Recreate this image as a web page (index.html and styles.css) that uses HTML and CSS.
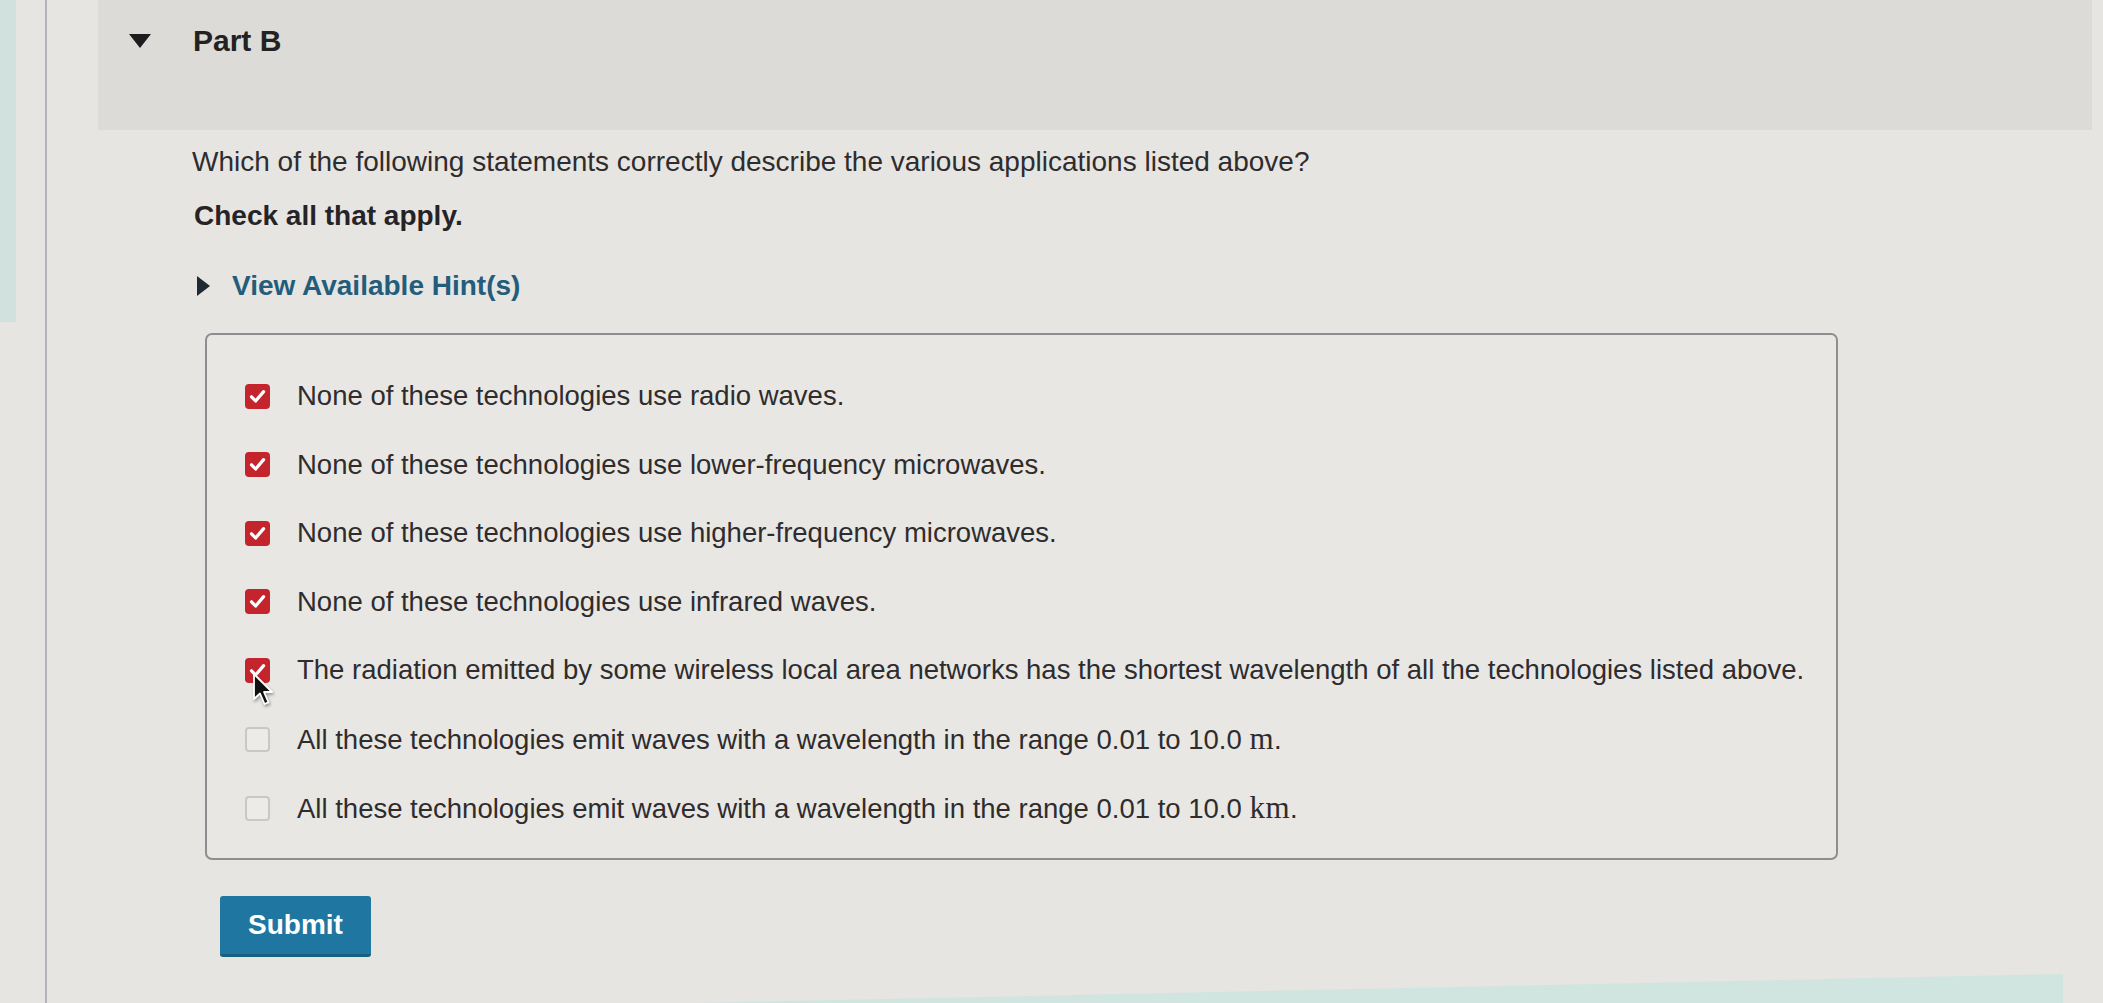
FILE: index.html
```html
<!DOCTYPE html>
<html lang="en">
<head>
<meta charset="utf-8">
<title>Part B</title>
<link rel="stylesheet" href="styles.css">
</head>
<body>
<div class="page">
  <aside class="rail"><div class="rail-teal"></div></aside>
  <main class="main">
    <header class="part-head">
      <span class="caret-down"></span>
      <h2 class="part-title">Part B</h2>
    </header>
    <section class="part-body">
      <p class="question">Which of the following statements correctly describe the various applications listed above?</p>
      <p class="instr">Check all that apply.</p>
      <div class="hint"><span class="caret-right"></span><span class="hint-link">View Available Hint(s)</span></div>
      <div class="options">
        <label class="opt"><span class="cb on"><svg viewBox="0 0 25 25" width="25" height="25"><path d="M6.5 12.8 L10.6 17 L18.6 7.6" fill="none" stroke="#fff" stroke-width="3.2" stroke-linecap="round" stroke-linejoin="round"/></svg></span><span class="opt-text">None of these technologies use radio waves.</span></label>
        <label class="opt"><span class="cb on"><svg viewBox="0 0 25 25" width="25" height="25"><path d="M6.5 12.8 L10.6 17 L18.6 7.6" fill="none" stroke="#fff" stroke-width="3.2" stroke-linecap="round" stroke-linejoin="round"/></svg></span><span class="opt-text">None of these technologies use lower-frequency microwaves.</span></label>
        <label class="opt"><span class="cb on"><svg viewBox="0 0 25 25" width="25" height="25"><path d="M6.5 12.8 L10.6 17 L18.6 7.6" fill="none" stroke="#fff" stroke-width="3.2" stroke-linecap="round" stroke-linejoin="round"/></svg></span><span class="opt-text">None of these technologies use higher-frequency microwaves.</span></label>
        <label class="opt"><span class="cb on"><svg viewBox="0 0 25 25" width="25" height="25"><path d="M6.5 12.8 L10.6 17 L18.6 7.6" fill="none" stroke="#fff" stroke-width="3.2" stroke-linecap="round" stroke-linejoin="round"/></svg></span><span class="opt-text">None of these technologies use infrared waves.</span></label>
        <label class="opt"><span class="cb on"><svg viewBox="0 0 25 25" width="25" height="25"><path d="M6.5 12.8 L10.6 17 L18.6 7.6" fill="none" stroke="#fff" stroke-width="3.2" stroke-linecap="round" stroke-linejoin="round"/></svg><svg class="cursor" viewBox="0 0 24 36" width="24" height="36"><path d="M2 2 L2 27 L8 21.5 L12.5 32 L16.5 30.3 L12 20 L20 20 Z" fill="#111" stroke="#fff" stroke-width="1.8" stroke-linejoin="round"/></svg></span><span class="opt-text">The radiation emitted by some wireless local area networks has the shortest wavelength of all the technologies listed above.</span></label>
        <label class="opt"><span class="cb"></span><span class="opt-text">All these technologies emit waves with a wavelength in the range 0.01 to 10.0 <span class="math">m</span>.</span></label>
        <label class="opt"><span class="cb"></span><span class="opt-text">All these technologies emit waves with a wavelength in the range 0.01 to 10.0 <span class="math">km</span>.</span></label>
      </div>
      <button class="submit" type="button">Submit</button>
    </section>
    <div class="footer-strip"></div>
  </main>
</div>
</body>
</html>
```

FILE: styles.css
```css
html, body {
  margin: 0;
  padding: 0;
  height: 100%;
  overflow: hidden;
}
body {
  background: #e6e5e2;
  font-family: "Liberation Sans", Arial, Helvetica, sans-serif;
  color: #2f2c2e;
}
.page {
  display: flex;
  height: 1003px;
}
.rail {
  width: 45px;
  flex: none;
}
.rail-teal {
  width: 16px;
  height: 322px;
  background: #d1e1dd;
}
.main {
  flex: 1;
  border-left: 2px solid #b3b3bb;
  display: flex;
  flex-direction: column;
}
.main > * {
  flex-shrink: 0;
}
.part-head {
  margin: 0 11px 0 51px;
  height: 130px;
  background: #dcdbd8;
  display: flex;
  align-items: flex-start;
  padding: 24px 0 0 31px;
  box-sizing: border-box;
}
.caret-down {
  width: 0;
  height: 0;
  border-left: 11.5px solid transparent;
  border-right: 11.5px solid transparent;
  border-top: 14px solid #1d1d1f;
  margin-top: 10px;
}
.part-title {
  margin: 0 0 0 42px;
  font-size: 30px;
  line-height: 34px;
  font-weight: 700;
  color: #222;
}
.part-body {
  padding-left: 145px;
  display: flex;
  flex-direction: column;
  align-items: flex-start;
}
.question {
  margin: 15px 0 0 0;
  font-size: 28px;
  line-height: 34px;
}
.instr {
  margin: 20px 0 0 2px;
  font-size: 28px;
  line-height: 34px;
  font-weight: 700;
  color: #262326;
}
.hint {
  margin-top: 36px;
  display: flex;
  align-items: center;
  height: 34px;
  margin-left: 5px;
}
.caret-right {
  width: 0;
  height: 0;
  border-top: 10px solid transparent;
  border-bottom: 10px solid transparent;
  border-left: 13px solid #1f2a33;
}
.hint-link {
  margin-left: 22px;
  font-size: 28px;
  line-height: 34px;
  font-weight: 700;
  color: #235d7b;
}
.options {
  margin: 30px 0 0 13px;
  width: 1633px;
  box-sizing: border-box;
  border: 2px solid #8e8e90;
  border-radius: 7px;
  padding: 44px 10px 32px 38px;
  display: flex;
  flex-direction: column;
  gap: 34.5px;
  background: #e8e7e4;
}
.opt {
  display: flex;
  align-items: center;
  min-height: 34px;
}
.cb {
  position: relative;
  flex: none;
  width: 25px;
  height: 25px;
  box-sizing: border-box;
  border-radius: 4px;
  border: 2px solid #c9c8c6;
  background: #ecebe8;
}
.cb.on {
  border: none;
  background: #c4252d;
}
.cb svg {
  display: block;
}
.cb .cursor {
  position: absolute;
  left: 7px;
  top: 14px;
  filter: drop-shadow(1px 2px 1.5px rgba(0,0,0,0.35));
}
.opt-text {
  margin-left: 27px;
  font-size: 27.5px;
  line-height: 34px;
  white-space: nowrap;
}
.math {
  font-family: "Liberation Serif", "Times New Roman", serif;
  font-size: 31px;
  letter-spacing: 0.5px;
}
.submit {
  margin: 36px 0 0 28px;
  width: 151px;
  height: 61px;
  border: none;
  border-bottom: 3px solid #17607f;
  border-radius: 3px;
  background: #1f77a1;
  color: #fff;
  font-family: "Liberation Sans", Arial, sans-serif;
  font-size: 28px;
  font-weight: 700;
  padding: 0;
}
.footer-strip {
  margin: 17px 40px 0 553px;
  height: 31px;
  background: #d1e5e0;
  clip-path: polygon(0 100%, 100% 0, 100% 100%);
}
```
